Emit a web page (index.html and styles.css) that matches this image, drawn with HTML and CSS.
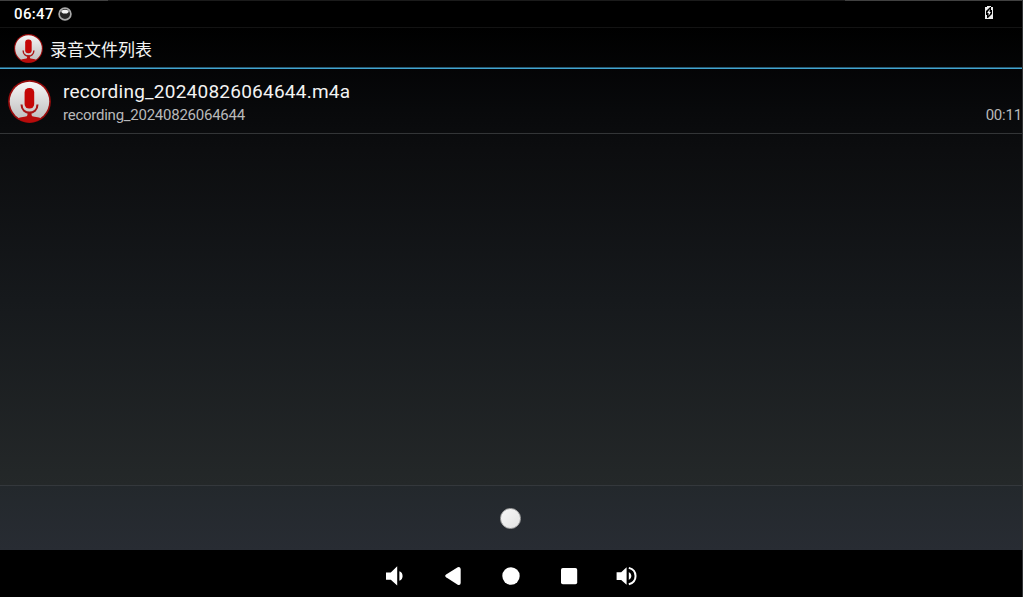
FILE: index.html
```
<!DOCTYPE html>
<html lang="zh-CN">
<head>
<meta charset="utf-8">
<title>录音文件列表</title>
<link rel="stylesheet" href="styles.css">
</head>
<body>
<svg class="defs" width="0" height="0" aria-hidden="true">
  <defs>
    <linearGradient id="silver" x1="0" y1="0" x2="0" y2="1">
      <stop offset="0" stop-color="#f6f6f6"/><stop offset="1" stop-color="#bcbcbc"/>
    </linearGradient>
    <clipPath id="disc"><circle cx="21" cy="21" r="20.4"/></clipPath>
    <symbol id="mic" viewBox="0 0 42 42">
      <circle cx="21" cy="21" r="20.9" fill="#980c0c"/>
      <circle cx="21" cy="21" r="19.3" fill="url(#silver)"/>
      <g clip-path="url(#disc)">
        <path d="M7 42V38.6Q12 36 16 36Q19 35.8 19 34V31H23V34Q23 35.8 26 36Q30 36 35 38.6V42Z" fill="#b80c0c"/>
      </g>
      <rect x="16.2" y="7.8" width="9.4" height="20" rx="4.4" fill="#c40606"/>
      <path d="M13.2 24C13.2 34.6 28.8 34.6 28.8 24" fill="none" stroke="#a81414" stroke-width="2"/>
    </symbol>
  </defs>
</svg>
<div class="screen">
  <header class="status">
    <span class="clock">06:47</span>
    <svg class="notice" width="14" height="14" viewBox="0 0 14 14">
      <circle cx="7" cy="7" r="5.9" fill="#242424" stroke="#a8a8a8" stroke-width="1.7"/>
      <path d="M3.2 3.8Q7 1.8 10.8 3.8L10.3 5.6L8.8 6.6H5.2L3.7 5.6Z" fill="#f2f2f2"/>
    </svg>
    <svg class="battery" width="8" height="13" viewBox="0 0 8 13">
      <path d="M0 1H2V0H6V1H8V13H0Z" fill="#eee"/>
      <path d="M5.2 1L1 5V9H2V12H3L7 8V4H6V1Z" fill="#000"/>
      <path d="M4.8 3L2.2 7H3.6V10L5.9 6H4.5Z" fill="#fff"/>
    </svg>
  </header>
  <div class="titlebar">
    <svg class="app-icon"><use href="#mic"/></svg>
    <h1 class="title">录音文件列表</h1>
  </div>
  <main class="list">
    <div class="row">
      <svg class="row-icon"><use href="#mic"/></svg>
      <div class="row-text">
        <div class="name">recording_20240826064644.m4a</div>
        <div class="meta"><span class="file">recording_20240826064644</span><span class="time">00:11</span></div>
      </div>
    </div>
  </main>
  <div class="controls"><div class="record"></div></div>
  <nav class="nav">
    <svg viewBox="0 0 24 24"><path d="M3 8.4H7.8L14.2 2.2V21.6L7.8 15.8H3Z"/><path d="M16.4 7.2Q19.6 8.5 19.6 12T16.4 16.8Z"/></svg>
    <svg viewBox="0 0 24 24"><path d="M5.1 10.6L16.7 3.2Q19.1 2.2 19.7 5V19Q19.4 21.8 16.7 20.7L5.1 13.3Q3.1 12 5.1 10.6Z"/></svg>
    <svg viewBox="0 0 24 24"><circle cx="12" cy="12" r="8.7"/></svg>
    <svg viewBox="0 0 24 24"><rect x="4" y="4" width="16.2" height="16.2" rx="1.8"/></svg>
    <svg viewBox="0 0 24 24"><path d="M1.6 8.2H6.2L11.6 3.2V20.8L6.2 16H1.6Z"/><path d="M13.8 8Q16.4 9.3 16.4 12T13.8 16Z"/><path class="wave" d="M13.8 3.9C22.8 6.2 22.8 18 13.8 20.3"/></svg>
  </nav>
</div>
</body>
</html>
```

FILE: styles.css
```
body {
  margin: 0;
  background: #000;
  font-family: Roboto, "Noto Sans CJK SC", sans-serif;
}
.defs { position: absolute; }
.screen {
  box-sizing: border-box;
  width: 1023px;
  height: 597px;
  display: flex;
  flex-direction: column;
  overflow: hidden;
  border-right: 1px solid #303234;
  background: linear-gradient(#000 27px, #08090b 110px, #0c0d0f 150px, #16191c 300px, #242829 485px);
}
.status {
  box-sizing: border-box;
  height: 28px;
  display: flex;
  align-items: center;
  padding: 1px 29px 0 14px;
  border-bottom: 1px solid #131313;
  background: linear-gradient(90deg, #414141 108px, #1b1b1b 108px 845px, #414141 845px) top / 100% 1px no-repeat #000;
}
.clock {
  width: 44px;
  color: #fff;
  font-size: 15px;
  font-weight: 500;
  letter-spacing: 0.35px;
  line-height: 26px;
}
.notice { margin-top: 0; }
.battery { margin: -3px 0 0 auto; }
.titlebar {
  box-sizing: border-box;
  height: 41px;
  display: flex;
  align-items: center;
  gap: 7px;
  padding: 0 0 2px 14px;
  background: linear-gradient(#255a73 1px, #42a4d0 1px) bottom / 100% 2px no-repeat;
}
.app-icon { width: 29px; height: 29px; margin-top: 2px; }
.title {
  margin: 5px 0 0;
  color: #f3f3f3;
  font-size: 17px;
  font-weight: 400;
  line-height: 24px;
}
.list { flex: 1; }
.row {
  box-sizing: border-box;
  height: 65px;
  display: flex;
  align-items: center;
  gap: 12px;
  padding-left: 8px;
  border-bottom: 1px solid #333537;
}
.row-icon { width: 43px; height: 43px; margin-top: 1px; }
.row-text { flex: 1; padding-top: 2px; }
.name {
  color: #f3f3f3;
  font-size: 19px;
  letter-spacing: 0.24px;
  line-height: 25px;
}
.meta {
  display: flex;
  justify-content: space-between;
  color: #b8b9ba;
  font-size: 15px;
  line-height: 22px;
}
.file { letter-spacing: -0.25px; }
.time { letter-spacing: -0.2px; }
.controls {
  box-sizing: border-box;
  height: 65px;
  display: flex;
  align-items: center;
  justify-content: center;
  padding-right: 2px;
  border-top: 1px solid #34383c;
  background: linear-gradient(#23282c, #282c33);
}
.record {
  box-sizing: border-box;
  width: 21px;
  height: 21px;
  border: 1px solid #aaa;
  border-radius: 50%;
  background: linear-gradient(135deg, #f8f8f8, #e2e2e2);
}
.nav {
  box-sizing: border-box;
  height: 47px;
  display: flex;
  align-items: center;
  justify-content: center;
  gap: 34px;
  padding-right: 1px;
  background: #000;
}
.nav svg { width: 24px; height: 24px; margin-top: 4px; fill: #fff; }
.nav .wave { fill: none; stroke: #fff; stroke-width: 2; }
```
